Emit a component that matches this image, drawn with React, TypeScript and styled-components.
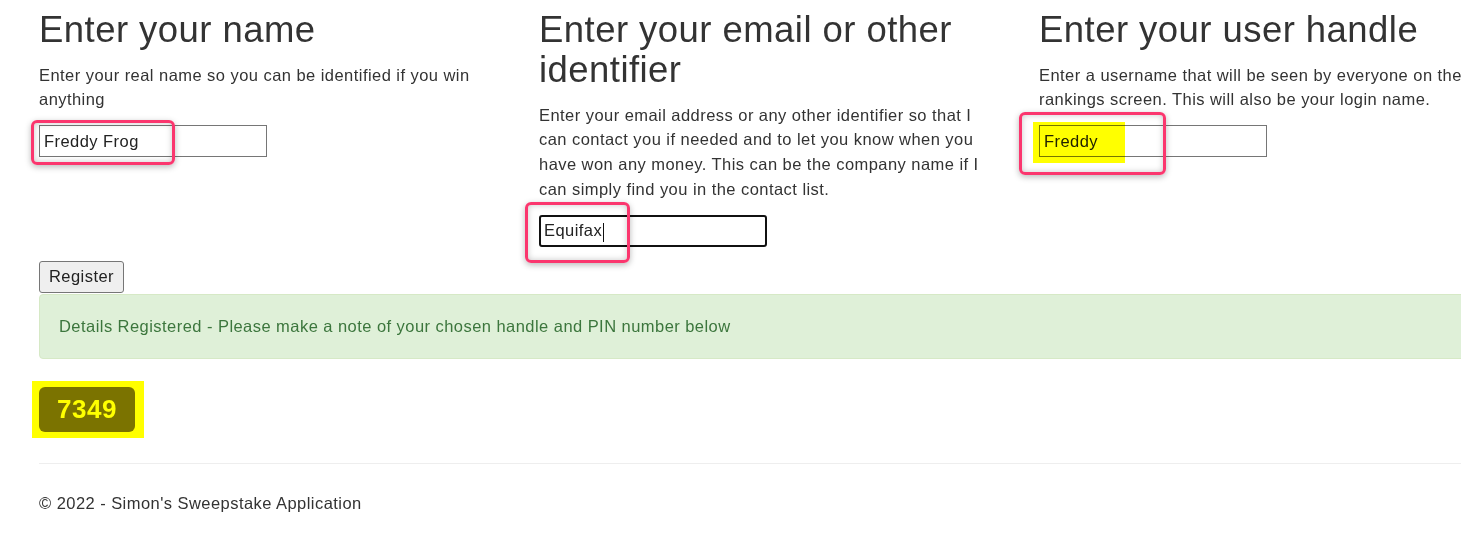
import React from 'react';
import styled, { createGlobalStyle } from 'styled-components';

const GlobalStyle = createGlobalStyle`
  body {
    margin: 0;
    background: #fff;
    overflow: hidden;
    font-family: "Liberation Sans", Arial, sans-serif;
    color: #333;
  }
`;

interface FieldInfo {
  title: string;
  help: string;
  value: string;
  focused?: boolean;
  highlight?: boolean;
}

const fields: FieldInfo[] = [
  {
    title: 'Enter your name',
    help: 'Enter your real name so you can be identified if you win anything',
    value: 'Freddy Frog',
  },
  {
    title: 'Enter your email or other identifier',
    help: 'Enter your email address or any other identifier so that I can contact you if needed and to let you know when you have won any money. This can be the company name if I can simply find you in the contact list.',
    value: 'Equifax',
    focused: true,
  },
  {
    title: 'Enter your user handle',
    help: 'Enter a username that will be seen by everyone on the rankings screen. This will also be your login name.',
    value: 'Freddy',
    highlight: true,
  },
];

const App: React.FC = () => {
  return (
    <>
      <GlobalStyle />
      <Page>
        <Row>
          {fields.map((f, i) => (
            <Column key={i}>
              <Heading>{f.title}</Heading>
              <Help>{f.help}</Help>
              <FieldWrap>
                <TextInput type="text" readOnly value={f.value} $focused={f.focused} />
                {f.focused && <Caret />}
                {f.highlight && <Highlighter />}
                <Callout $wide={f.highlight} $tall={f.focused} />
              </FieldWrap>
            </Column>
          ))}
        </Row>
        <RegisterButton type="button">Register</RegisterButton>
        <Alert>Details Registered - Please make a note of your chosen handle and PIN number below</Alert>
        <PinRow>
          <PinHighlight>
            <Pin>7349</Pin>
          </PinHighlight>
        </PinRow>
        <Rule />
        <Footer>© 2022 - Simon's Sweepstake Application</Footer>
      </Page>
    </>
  );
};

export default App;

const Page = styled.div`
  padding: 10px 0 0 39px;
  width: 1470px;
  font-size: 16.5px;
  line-height: 24.7px;
  letter-spacing: 0.45px;
`;

const Row = styled.div`
  display: grid;
  grid-template-columns: repeat(3, 455px);
  column-gap: 45px;
  align-items: start;
`;

const Column = styled.div`
  display: flex;
  flex-direction: column;
  align-items: flex-start;
`;

const Heading = styled.h1`
  margin: 0 0 12.5px;
  font-size: 36.5px;
  line-height: 40px;
  font-weight: 400;
  letter-spacing: 0.45px;
  color: #333;
`;

const Help = styled.p`
  margin: 0 0 13.5px;
`;

const FieldWrap = styled.div`
  position: relative;
  width: 228px;
  height: 32px;
`;

const TextInput = styled.input<{ $focused?: boolean }>`
  box-sizing: border-box;
  width: 228px;
  height: 32px;
  margin: 0;
  padding: 1px ${(p) => (p.$focused ? '3px' : '4px')};
  font-family: "Liberation Sans", Arial, sans-serif;
  font-size: 16.5px;
  letter-spacing: 0.45px;
  color: #222;
  background: #fff;
  border: ${(p) => (p.$focused ? '2px solid #111' : '1px solid #767676')};
  border-radius: ${(p) => (p.$focused ? '3px' : '0')};
  outline: none;
`;

const Caret = styled.span`
  position: absolute;
  left: 64px;
  top: 8px;
  width: 1px;
  height: 19px;
  background: #111;
`;

const Highlighter = styled.span`
  position: absolute;
  left: -6px;
  top: -3px;
  width: 92px;
  height: 41px;
  background: #ffff00;
  mix-blend-mode: multiply;
`;

const Callout = styled.span<{ $wide?: boolean; $tall?: boolean }>`
  position: absolute;
  left: ${(p) => (p.$wide ? '-20px' : p.$tall ? '-14px' : '-8px')};
  top: ${(p) => (p.$wide ? '-13px' : p.$tall ? '-13px' : '-5px')};
  width: ${(p) => (p.$wide ? '147px' : p.$tall ? '105px' : '144px')};
  height: ${(p) => (p.$wide ? '63px' : p.$tall ? '61px' : '45px')};
  box-sizing: border-box;
  border: 3px solid #fb366e;
  border-radius: 6px;
  box-shadow: 0 2px 6px rgba(0, 0, 0, 0.28), inset 0 0 6px rgba(0, 0, 0, 0.22);
  pointer-events: none;
`;

const RegisterButton = styled.button`
  margin: 14px 0 1px;
  height: 32px;
  padding: 1px 9px;
  font-family: "Liberation Sans", Arial, sans-serif;
  font-size: 16.5px;
  letter-spacing: 0.45px;
  color: #222;
  background: #efefef;
  border: 1px solid #767676;
  border-radius: 3px;
`;

const Alert = styled.div`
  box-sizing: border-box;
  width: 1470px;
  padding: 19px 19px;
  color: #3c763d;
  background: #dff0d8;
  border: 1px solid #d6e9c6;
  border-radius: 4px;
`;

const PinRow = styled.div`
  display: flex;
  margin-top: 22px;
`;

const PinHighlight = styled.div`
  display: flex;
  margin-left: -7px;
  padding: 6px 9px 6px 7px;
  background: #ffff00;
`;

const Pin = styled.span`
  display: inline-flex;
  align-items: center;
  height: 45px;
  padding: 0 18px;
  font-size: 26px;
  font-weight: 700;
  letter-spacing: 0.5px;
  color: #ffff00;
  background: #7b7300;
  border-radius: 6px;
`;

const Rule = styled.hr`
  width: 1470px;
  margin: 25px 0 27px;
  border: 0;
  border-top: 1px solid #eee;
`;

const Footer = styled.p`
  margin: 0;
`;
